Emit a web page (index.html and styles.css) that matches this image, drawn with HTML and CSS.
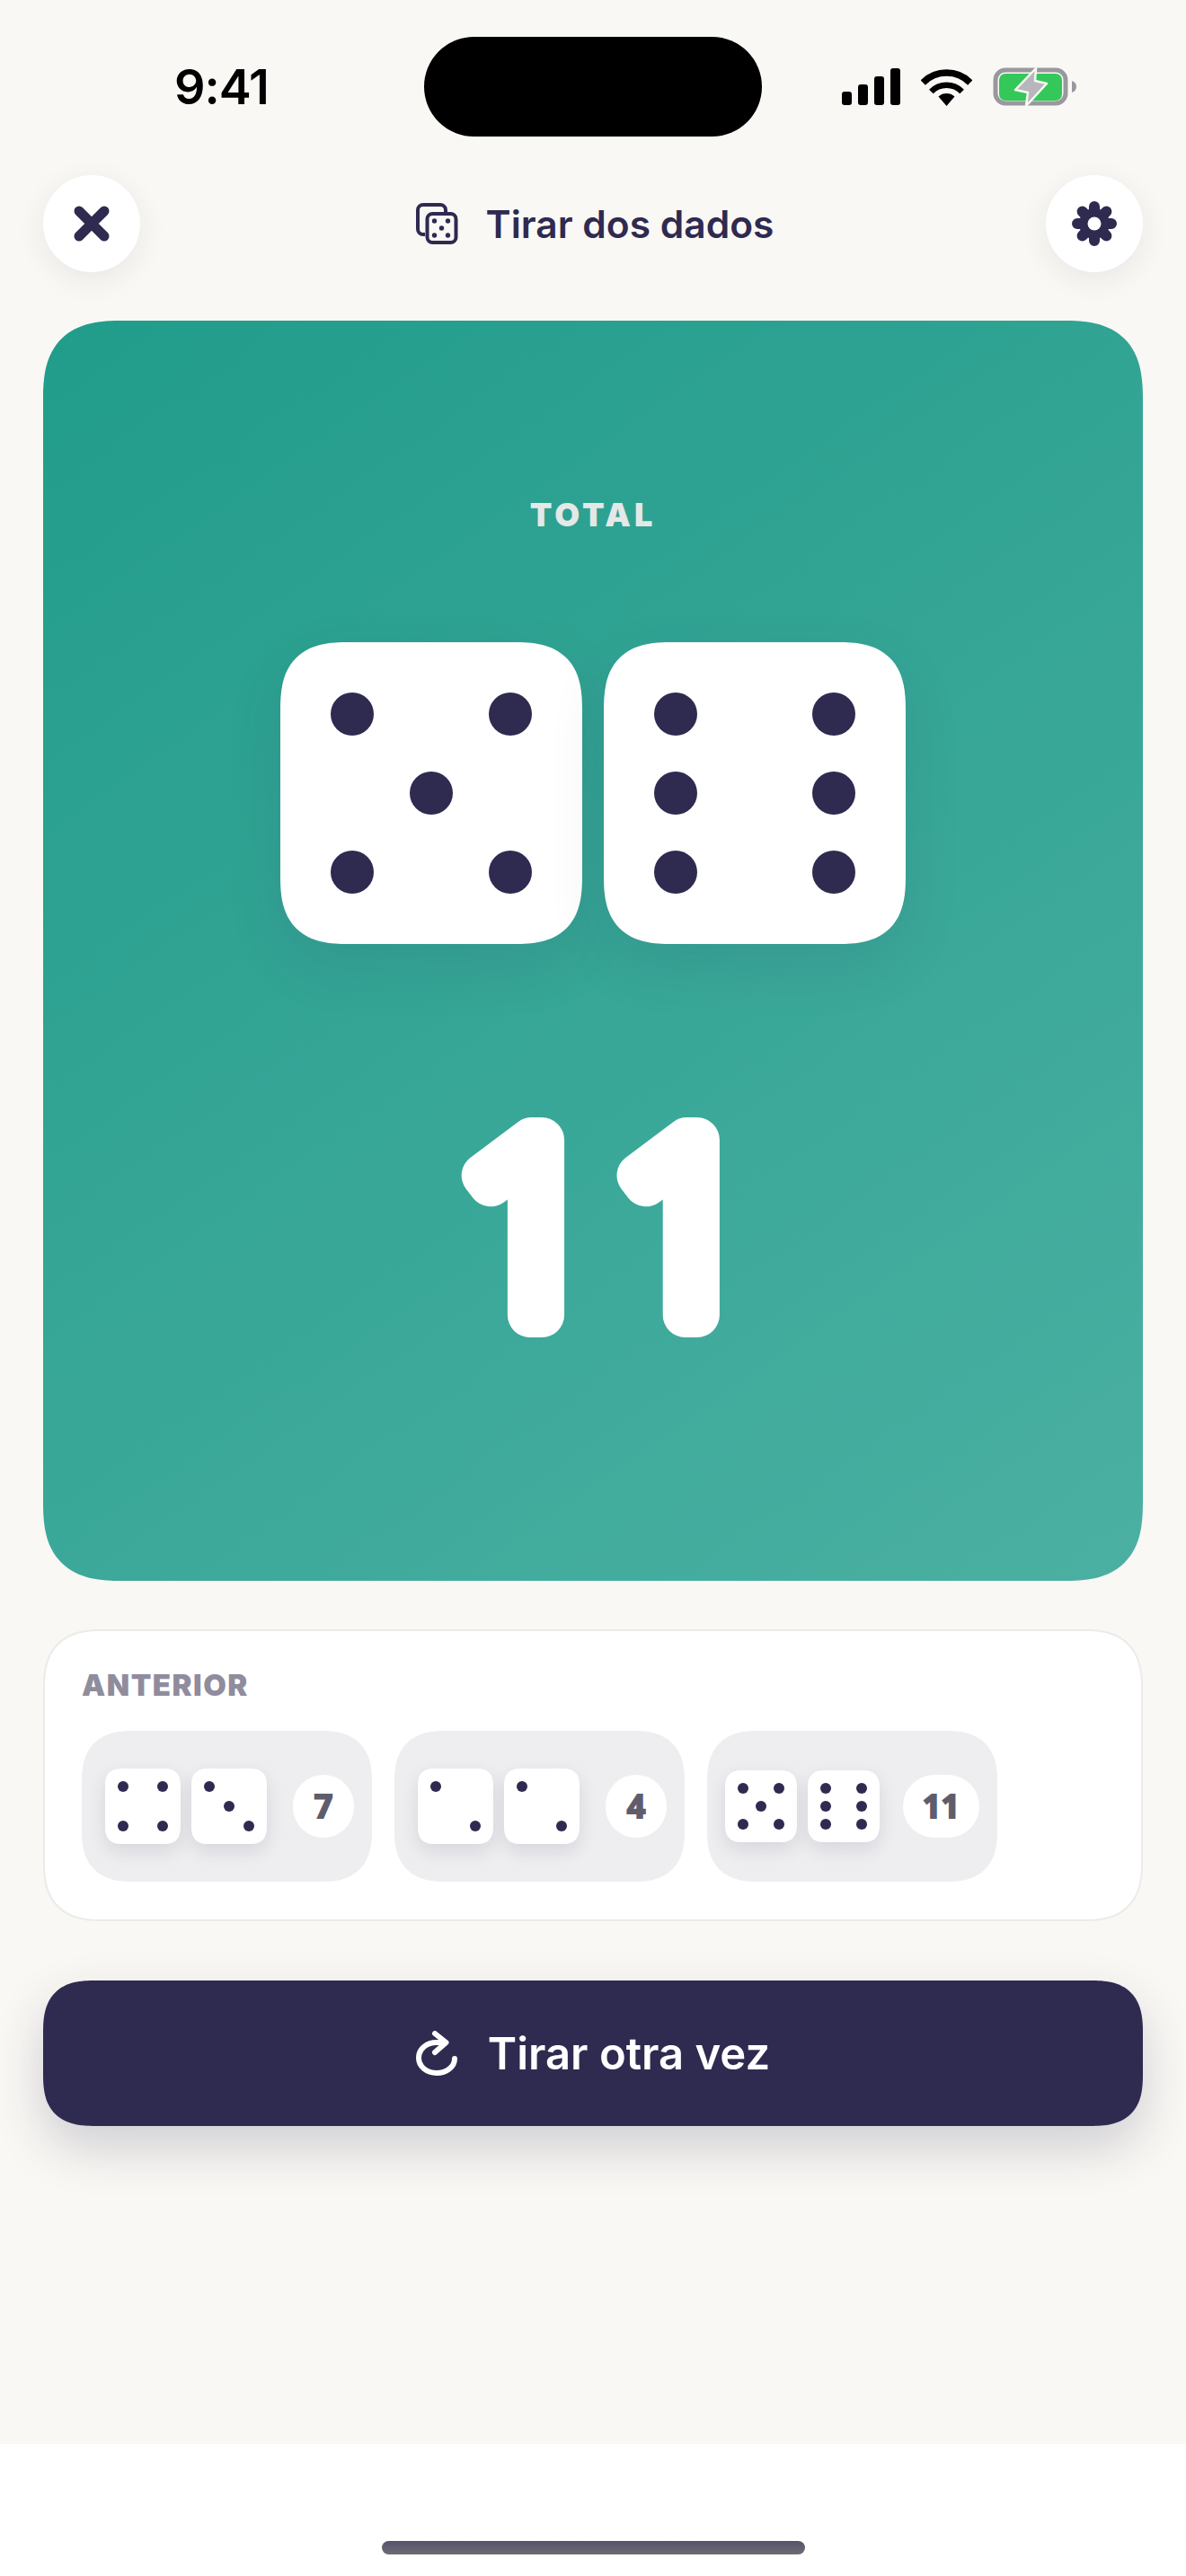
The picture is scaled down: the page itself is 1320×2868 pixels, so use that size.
FILE: index.html
```html
<!DOCTYPE html>
<html lang="en">
<head>
  <meta charset="UTF-8" />
  <title>Tirar dos dados</title>
  <link rel="stylesheet" href="styles.css">
</head>
<body>
<div class="screen">

  <!-- Status bar -->
  <div class="statusbar">
    <div class="time">9:41</div>
    <div class="island"></div>
    <div class="status-icons">
      <div class="signal">
        <span class="bar bar-1"></span>
        <span class="bar bar-2"></span>
        <span class="bar bar-3"></span>
        <span class="bar bar-4"></span>
      </div>
      <svg class="wifi" width="57" height="42" viewBox="0 0 57 42">
        <path d="M2.2 16 A37 37 0 0 1 54.8 16" fill="none" stroke="#000" stroke-width="7.5"/>
        <path d="M11.4 26 A24 24 0 0 1 45.6 26" fill="none" stroke="#000" stroke-width="6.5"/>
        <path d="M28.5 42 L19.5 31.5 A13.5 13.5 0 0 1 37.5 31.5 Z" fill="#000"/>
      </svg>
      <svg class="battery" width="93" height="44" viewBox="0 0 93 44">
        <rect x="3" y="3" width="78" height="37" rx="11" fill="none" stroke="#98989e" stroke-width="5"/>
        <rect x="7" y="7" width="70" height="30" rx="7" fill="#34c759"/>
        <path d="M88 15 C91 16 93 18 93 21.5 C93 25 91 27 88 28 Z" fill="#98989e"/>
        <path d="M48 1 L25 25 L39 28 L37 43 L60 18 L47 15 Z" fill="#b7b7bb" stroke="#f9f8f4" stroke-width="2.5" stroke-linejoin="round"/>
      </svg>
    </div>
  </div>

  <!-- Header -->
  <div class="topbar">
    <button class="round-btn">
      <svg width="40" height="40" viewBox="0 0 40 40">
        <path d="M6 6 L34 34 M34 6 L6 34" fill="none" stroke="#2f2a50" stroke-width="11" stroke-linecap="round"/>
      </svg>
    </button>
    <div class="title">
      <svg width="47" height="46" viewBox="0 0 47 46">
        <path d="M10 35 H8 a6 6 0 0 1 -6 -6 V8 a6 6 0 0 1 6 -6 H27 a6 6 0 0 1 6 6 V10" fill="none" stroke="#2f2a50" stroke-width="4"/>
        <rect x="12.5" y="12" width="32" height="32" rx="6" fill="none" stroke="#2f2a50" stroke-width="4"/>
        <g fill="#2f2a50">
          <circle cx="20.5" cy="20" r="2.7"/>
          <circle cx="35.5" cy="20" r="2.7"/>
          <circle cx="28.5" cy="28" r="2.7"/>
          <circle cx="20.5" cy="36" r="2.7"/>
          <circle cx="35.5" cy="36" r="2.7"/>
        </g>
      </svg>
      <span>Tirar dos dados</span>
    </div>
    <button class="round-btn">
      <svg width="50" height="50" viewBox="0 0 50 50">
        <path d="M25 6 V44 M6 25 H44 M11.6 11.6 L38.4 38.4 M38.4 11.6 L11.6 38.4" fill="none" stroke="#2f2a50" stroke-width="12" stroke-linecap="round"/>
        <circle cx="25" cy="25" r="17" fill="#2f2a50"/>
        <circle cx="25" cy="25" r="7.5" fill="#fff"/>
      </svg>
    </button>
  </div>

  <!-- Main result -->
  <div class="result">
    <div class="result-label">TOTAL</div>
    <div class="dice-row">
      <div class="die">
        <i class="pip"></i><i></i><i class="pip"></i>
        <i></i><i class="pip"></i><i></i>
        <i class="pip"></i><i></i><i class="pip"></i>
      </div>
      <div class="die">
        <i class="pip"></i><i></i><i class="pip"></i>
        <i class="pip"></i><i></i><i class="pip"></i>
        <i class="pip"></i><i></i><i class="pip"></i>
      </div>
    </div>
    <svg class="result-total" width="520" height="420" viewBox="0 0 520 420">
      <text x="285" y="323" text-anchor="middle">11</text>
    </svg>
  </div>

  <!-- Previous rolls -->
  <div class="previous">
    <div class="previous-label">ANTERIOR</div>
    <div class="chips">
      <div class="chip">
        <div class="die die-small">
          <i class="pip"></i><i></i><i class="pip"></i>
          <i></i><i></i><i></i>
          <i class="pip"></i><i></i><i class="pip"></i>
        </div>
        <div class="die die-small">
          <i class="pip"></i><i></i><i></i>
          <i></i><i class="pip"></i><i></i>
          <i></i><i></i><i class="pip"></i>
        </div>
        <div class="badge">7</div>
      </div>
      <div class="chip">
        <div class="die die-small">
          <i class="pip"></i><i></i><i></i>
          <i></i><i></i><i></i>
          <i></i><i></i><i class="pip"></i>
        </div>
        <div class="die die-small">
          <i class="pip"></i><i></i><i></i>
          <i></i><i></i><i></i>
          <i></i><i></i><i class="pip"></i>
        </div>
        <div class="badge">4</div>
      </div>
      <div class="chip chip-wide">
        <div class="die die-small">
          <i class="pip"></i><i></i><i class="pip"></i>
          <i></i><i class="pip"></i><i></i>
          <i class="pip"></i><i></i><i class="pip"></i>
        </div>
        <div class="die die-small">
          <i class="pip"></i><i></i><i class="pip"></i>
          <i class="pip"></i><i></i><i class="pip"></i>
          <i class="pip"></i><i></i><i class="pip"></i>
        </div>
        <div class="badge">11</div>
      </div>
    </div>
  </div>

  <!-- Roll again -->
  <button class="roll-btn">
    <svg width="46" height="50" viewBox="0 0 46 50">
      <path d="M32 13 H23 C12 13 3 20 3 30 C3 40 12 47 23 47 C34 47 43 40 43 31" fill="none" stroke="#fff" stroke-width="6" stroke-linecap="round"/>
      <path d="M21 3 L33.5 13 L21 24" fill="none" stroke="#fff" stroke-width="6" stroke-linecap="round" stroke-linejoin="round"/>
    </svg>
    <span>Tirar otra vez</span>
  </button>

  <!-- Home indicator -->
  <div class="home-area">
    <div class="home-bar"></div>
  </div>

</div>
</body>
</html>
```

FILE: styles.css
```css
* {
  box-sizing: border-box;
}
body {
  margin: 0;
  background: #f9f8f4;
  font-family: Inter, "Liberation Sans", sans-serif;
  color: #2f2a50;
}
button {
  border: none;
  font-family: inherit;
  padding: 0;
}
.screen {
  width: 1320px;
  height: 2868px;
  display: flex;
  flex-direction: column;
  overflow: hidden;
}

/* status bar */
.statusbar {
  height: 195px;
  padding-top: 41px;
  display: flex;
  align-items: flex-start;
}
.time {
  width: 472px;
  height: 111px;
  padding-left: 194px;
  font-size: 54px;
  font-weight: 600;
  letter-spacing: -1px;
  line-height: 111px;
  color: #000;
}
.island {
  width: 376px;
  height: 111px;
  border-radius: 56px;
  background: #000;
}
.status-icons {
  height: 111px;
  margin-left: 89px;
  display: flex;
  align-items: center;
  gap: 23px;
}
.signal {
  width: 65px;
  height: 41px;
  display: flex;
  align-items: flex-end;
  justify-content: space-between;
}
.bar {
  width: 11px;
  border-radius: 3px;
  background: #000;
}
.bar-1 { height: 15px; }
.bar-2 { height: 23px; }
.bar-3 { height: 32px; }
.bar-4 { height: 41px; }

/* header */
.topbar {
  height: 108px;
  padding: 0 48px;
  display: flex;
  align-items: center;
  justify-content: space-between;
}
.round-btn {
  width: 108px;
  height: 108px;
  border-radius: 50%;
  background: #fff;
  box-shadow: 0 8px 32px rgba(47, 42, 80, 0.08);
  display: flex;
  align-items: center;
  justify-content: center;
}
.title {
  margin-left: 4px;
  display: flex;
  align-items: center;
  gap: 31px;
  font-size: 42.5px;
  font-weight: 600;
}

/* big card */
.result {
  height: 1403px;
  margin: 54px 48px 0;
  padding-top: 194px;
  border-radius: 88px;
  corner-shape: superellipse(1.4);
  background: linear-gradient(145deg, #219c8b 0%, #4bb0a2 100%);
  display: flex;
  flex-direction: column;
  align-items: center;
}
.result-label {
  font-size: 36px;
  line-height: 44px;
  font-weight: 900;
  letter-spacing: 4px;
  color: #e5e8e7;
}
.dice-row {
  margin-top: 120px;
  display: flex;
  gap: 24px;
}
.die {
  width: 336px;
  height: 336px;
  padding: 56px;
  border-radius: 76px;
  corner-shape: superellipse(1.4);
  background: #fff;
  box-shadow: 0 24px 64px rgba(47, 42, 80, 0.1);
  display: grid;
  grid-template-columns: repeat(3, 48px);
  grid-template-rows: repeat(3, 48px);
  gap: 40px;
}
.pip {
  border-radius: 50%;
  corner-shape: round;
  background: #2f2a50;
}
.result-total {
  margin-top: 90px;
}
.result-total text {
  font-family: "Open Sans", sans-serif;
  font-size: 273px;
  font-weight: 300;
  letter-spacing: 17px;
  fill: #fff;
  stroke: #fff;
  stroke-width: 50px;
  stroke-linejoin: round;
  stroke-linecap: round;
}

/* previous rolls */
.previous {
  height: 325px;
  margin: 54px 48px 0;
  padding: 40px 41px 0;
  border: 2px solid #ecebe9;
  border-radius: 64px;
  corner-shape: superellipse(1.3);
  background: #fff;
}
.previous-label {
  font-size: 33px;
  line-height: 40px;
  font-weight: 900;
  letter-spacing: 1.5px;
  color: #8f8c9e;
}
.chips {
  margin-top: 31px;
  display: flex;
  gap: 25px;
}
.chip {
  width: 323px;
  height: 168px;
  padding: 0 20px 0 26px;
  border-radius: 56px;
  corner-shape: superellipse(1.3);
  background: #eeeef0;
  display: flex;
  align-items: center;
  gap: 12px;
}
.die-small {
  width: 84px;
  height: 84px;
  padding: 14px;
  border-radius: 20px;
  box-shadow: 0 8px 20px rgba(47, 42, 80, 0.12);
  grid-template-columns: repeat(3, 12px);
  grid-template-rows: repeat(3, 12px);
  gap: 10px;
}
.badge {
  min-width: 68px;
  height: 70px;
  margin-left: auto;
  padding: 0 22px;
  border-radius: 35px;
  background: #fff;
  font-family: "Open Sans", sans-serif;
  font-size: 36px;
  font-weight: 700;
  line-height: 70px;
  text-align: center;
  color: #5f5d6c;
  -webkit-text-stroke: 2px #5f5d6c;
}
.chip-wide {
  padding-left: 20px;
}
.chip-wide .die-small {
  width: 80px;
  height: 80px;
  gap: 8px;
}

/* roll button */
.roll-btn {
  height: 162px;
  margin: 66px 48px 0;
  border-radius: 58px;
  corner-shape: superellipse(1.4);
  background: #2f2a50;
  box-shadow: 0 24px 56px rgba(47, 42, 80, 0.2);
  color: #fff;
  font-size: 49px;
  font-weight: 600;
  display: flex;
  align-items: center;
  justify-content: center;
  gap: 34px;
}

/* bottom */
.home-area {
  height: 147px;
  margin-top: auto;
  padding-top: 108px;
  background: #fff;
}
.home-bar {
  width: 471px;
  height: 15px;
  margin: 0 auto;
  border-radius: 8px;
  background: linear-gradient(#55536a, #6d6c75);
}
```
